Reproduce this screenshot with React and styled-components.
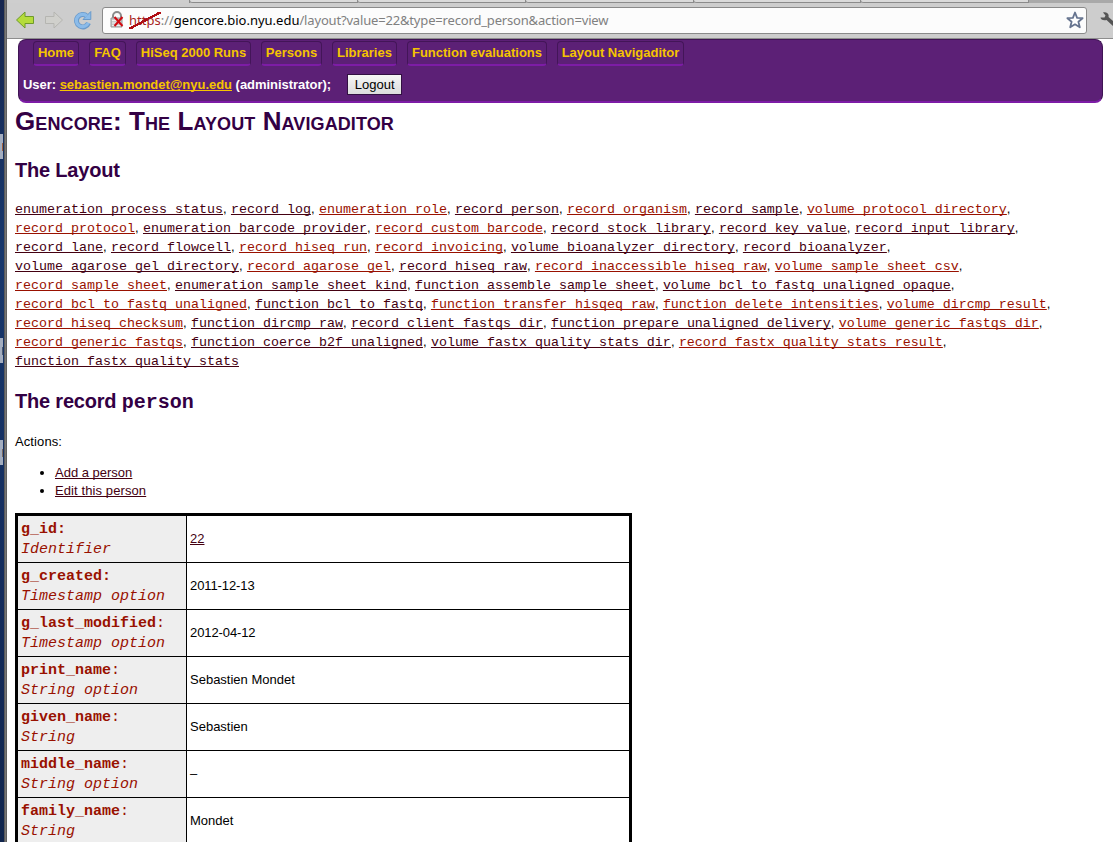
import React from "react";
import styled, { createGlobalStyle } from "styled-components";

const GlobalStyle = createGlobalStyle`
  * { box-sizing: border-box; }
  html, body { margin: 0; padding: 0; overflow: hidden; }
  body { font-family: "Liberation Sans", Arial, sans-serif; font-size: 13px; color: #000; background: #fff; }
`;

const Screen = styled.div`
  display: flex;
  width: 1113px;
  height: 842px;
  overflow: hidden;
`;

const Desktop = styled.div`
  flex: none;
  width: 4px;
  padding-top: 134px;
  background: linear-gradient(#16264f, #17376c 30%, #142c5c 70%, #10254d);
`;

const DesktopLabel = styled.div`
  display: flex;
  align-items: center;
  justify-content: flex-end;
  width: 3px;
  height: 25px;
  margin-bottom: ${(p) => p.$after || 0}px;
  background: #a3adbf;

  &::after {
    content: "";
    width: 1px;
    height: 8px;
    background: ${(p) => p.$mark};
  }
`;

const WindowEdge = styled.div`
  flex: none;
  width: 3px;
  background: linear-gradient(90deg, #4b4b4b, #777 50%, #555);
`;

const Browser = styled.div`
  flex: 1;
  min-width: 0;
  display: flex;
  flex-direction: column;
  background: #fff;
`;

const TabStrip = styled.div`
  flex: none;
  display: flex;
  height: 3px;
  background: #a9a9a9;
  border-top-left-radius: 3px;
`;

const Tab = styled.div`
  width: ${(p) => p.$w}px;
  background: ${(p) => (p.$active ? "#cecece" : "#dadada")};
  border-bottom: ${(p) => (p.$active ? "0" : "1px solid #8b8b8b")};
  border-right: 1px solid #8b8b8b;
  border-bottom-left-radius: ${(p) => (p.$active ? 0 : 3)}px;
`;

const Toolbar = styled.div`
  flex: none;
  display: flex;
  align-items: center;
  height: 36px;
  padding: 0 0 1px 8px;
  background: #cdcdcd;
  border-bottom: 1px solid #8d8d8d;
`;

const ToolIcon = styled.svg`
  flex: none;
  width: 20px;
  height: 20px;
  margin-right: ${(p) => p.$gap}px;
`;

const AddressBar = styled.div`
  flex: none;
  display: flex;
  align-items: center;
  width: 985px;
  height: 27px;
  padding: 0 1px 0 6px;
  background: #fcfcfc;
  border: 1px solid #8a8a8a;
  border-radius: 3px;
  margin-right: 12px;
`;

const Url = styled.div`
  flex: 1;
  font-family: "Noto Sans", "Open Sans", sans-serif;
  font-size: 13px;
  line-height: 20px;
  color: #808080;
  white-space: nowrap;
`;

const Scheme = styled.span`
  display: inline-block;
  height: 17px;
  line-height: 17px;
  color: #a81e22;
  background: linear-gradient(to bottom right, transparent 46%, #b00c12 46%, #b00c12 54%, transparent 54%);
`;

const Host = styled.span`
  color: #000;
`;

const UrlPath = styled.span`
  letter-spacing: -0.17px;
`;

const Page = styled.main`
  padding: 0 10px 0 8px;
`;

const Banner = styled.header`
  height: 64px;
  margin-left: 3px;
  padding: 1px 4px 0;
  background: #5c2076;
  border: 1px solid #3f1454;
  border-bottom: 2px solid #7d1ca6;
  border-radius: 8px;
  color: #fff;
  font-weight: bold;
`;

const Nav = styled.nav`
  display: flex;
  gap: 10px;
  padding-left: 10px;
`;

const NavItem = styled.a`
  width: ${(p) => p.$w}px;
  height: 25px;
  line-height: 22px;
  text-align: center;
  white-space: nowrap;
  color: #f5c400;
  border: 1px solid #431558;
  border-bottom: 2px solid #7d1ca6;
  border-radius: 4px;
`;

const UserRow = styled.div`
  display: flex;
  align-items: center;
  height: 21px;
  margin-top: 8px;
  white-space: pre;
  letter-spacing: -0.03px;
`;

const Mail = styled.a`
  color: #f5c400;
  text-decoration: underline;
  text-decoration-skip-ink: none;
`;

const Logout = styled.button`
  width: 55px;
  height: 21px;
  margin-left: 16px;
  padding: 0;
  font: 13px "Liberation Sans", Arial, sans-serif;
  color: #000;
  background: linear-gradient(#f6f6f6, #dcdcdc);
  border: 1px solid #321042;
`;

const Title = styled.h1`
  margin: 3px 0 0;
  font-size: 26px;
  line-height: 30px;
  font-variant: small-caps;
  letter-spacing: 0.1px;
  color: #330044;
`;

const Heading = styled.h2`
  margin: ${(p) => p.$top}px 0 0;
  font-size: 20px;
  line-height: 24px;
  letter-spacing: -0.2px;
  color: #330044;
`;

const Mono = styled.span`
  font-family: "Liberation Mono", monospace;
  letter-spacing: 0;
`;

const Links = styled.div`
  margin-top: 17px;
`;

const LinkLine = styled.div`
  height: 19px;
  line-height: 19px;
  white-space: pre;
`;

const TypeLink = styled.a`
  font-family: "Liberation Mono", monospace;
  font-size: 13.333px;
  color: ${(p) => (p.$fresh ? "#991100" : "#440011")};
  text-decoration: underline;
  text-decoration-skip-ink: none;
`;

const Separator = styled.span`
  display: inline-block;
  width: 8px;
`;

const Actions = styled.p`
  margin: 18px 0 0;
  line-height: 18px;
  letter-spacing: 0.1px;
`;

const ActionList = styled.ul`
  margin: 13px 0 0;
  padding-left: 40px;
  line-height: 18px;
`;

const Anchor = styled.a`
  color: #440011;
  letter-spacing: ${(p) => p.$spacing || 0}px;
  text-decoration: underline;
  text-decoration-skip-ink: none;
`;

const Record = styled.div`
  width: 617px;
  margin-top: 13px;
  border: 3px solid #000;
`;

const Row = styled.div`
  display: flex;
  height: 47px;
  border-bottom: 1px solid #000;
`;

const Field = styled.div`
  flex: none;
  width: 169px;
  padding: 4px 0 0 3px;
  background: #eee;
  border-right: 1px solid #000;
  font-family: "Liberation Mono", monospace;
  font-size: 15px;
  line-height: 20px;
  color: #991100;
`;

const Kind = styled.div`
  font-style: italic;
`;

const Value = styled.div`
  display: flex;
  align-items: center;
  padding: 0 0 2px 3px;
  letter-spacing: ${(p) => (p.$numeric ? -0.1 : 0)}px;
`;

const navItems = [
  ["Home", 46], ["FAQ", 37], ["HiSeq 2000 Runs", 115], ["Persons", 61],
  ["Libraries", 65], ["Function evaluations", 140], ["Layout Navigaditor", 127],
];

// A leading "*" marks a link that has not been visited.
const linkLines = [
  "enumeration_process_status record_log *enumeration_role record_person *record_organism record_sample *volume_protocol_directory",
  "*record_protocol enumeration_barcode_provider *record_custom_barcode record_stock_library record_key_value record_input_library",
  "record_lane record_flowcell *record_hiseq_run *record_invoicing volume_bioanalyzer_directory record_bioanalyzer",
  "volume_agarose_gel_directory *record_agarose_gel record_hiseq_raw *record_inaccessible_hiseq_raw *volume_sample_sheet_csv",
  "*record_sample_sheet enumeration_sample_sheet_kind function_assemble_sample_sheet volume_bcl_to_fastq_unaligned_opaque",
  "*record_bcl_to_fastq_unaligned function_bcl_to_fastq *function_transfer_hisqeq_raw *function_delete_intensities *volume_dircmp_result",
  "*record_hiseq_checksum function_dircmp_raw record_client_fastqs_dir function_prepare_unaligned_delivery *volume_generic_fastqs_dir",
  "*record_generic_fastqs function_coerce_b2f_unaligned volume_fastx_quality_stats_dir *record_fastx_quality_stats_result",
  "function_fastx_quality_stats",
].map((line) => line.split(" "));

const fields = [
  ["g_id", "Identifier", "22"],
  ["g_created", "Timestamp option", "2011-12-13"],
  ["g_last_modified", "Timestamp option", "2012-04-12"],
  ["print_name", "String option", "Sebastien Mondet"],
  ["given_name", "String", "Sebastien"],
  ["middle_name", "String option", "–"],
  ["family_name", "String", "Mondet"],
];

function Arrow({ fill, stroke, flip, gap }) {
  return (
    <ToolIcon viewBox="0 0 20 20" $gap={gap}>
      <path
        d="M1.5 10 10 2v4.5h8.5v7H10V18z"
        transform={flip ? "matrix(-1 0 0 1 20 0)" : undefined}
        fill={fill} stroke={stroke} strokeLinejoin="round"
      />
    </ToolIcon>
  );
}

export default function App() {
  return (
    <Screen>
      <GlobalStyle />
      <Desktop>
        <DesktopLabel $after={179} $mark="#a0603c" />
        <DesktopLabel $after={77} $mark="#4d5a70" />
        <DesktopLabel $mark="#7a6a60" />
      </Desktop>
      <WindowEdge />
      <Browser>
        <TabStrip>
          <Tab $w={183} $active />
          <Tab $w={168} /><Tab $w={168} /><Tab $w={168} /><Tab $w={167} /><Tab $w={168} />
        </TabStrip>
        <Toolbar>
          <Arrow fill="#b5dc3c" stroke="#6f9a2c" gap={9} />
          <Arrow fill="#d0d0cc" stroke="#b5b5b1" flip gap={9} />
          <ToolIcon viewBox="0 0 20 20" $gap={9}>
            <path d="M14 6.2A6.2 6.2 0 1 0 15.5 13" fill="none" stroke="#6a9acb" strokeWidth="5" />
            <path d="M17.8 1.5v8H10z" fill="#8bbbe9" stroke="#6a9acb" strokeLinejoin="round" />
            <path d="M14 6.2A6.2 6.2 0 1 0 15.3 12.7" fill="none" stroke="#8bbbe9" strokeWidth="3.2" />
          </ToolIcon>
          <AddressBar>
            <ToolIcon viewBox="0 0 20 20" $gap={0}>
              <path d="M4 9V6a4 4 0 0 1 8 0v3" fill="none" stroke="#8b8b8b" strokeWidth="2" />
              <path d="M2 8h11v9H2z" fill="#c9c9c9" stroke="#999" />
              <path d="M3 10.5h9M3 13h9M3 15.5h9" stroke="#eee" />
              <path d="m5.500 7 8 9M13.500 7l-8 9" stroke="#d00b12" strokeWidth="2" />
            </ToolIcon>
            <Url>
              <Scheme>https</Scheme>://<Host>gencore.bio.nyu.edu</Host>
              <UrlPath>/layout?value=22&amp;type=record_person&amp;action=view</UrlPath>
            </Url>
            <ToolIcon viewBox="0 0 20 20" $gap={0}>
              <path d="m10 2.500 2.100 5.300 5.500.4-4.200 3.600 1.400 5.500-4.800-3-4.800 3 1.400-5.500L2.400 8.200 7.900 7.800z" fill="#fff" stroke="#66748f" strokeWidth="1.800" strokeLinejoin="round" />
            </ToolIcon>
          </AddressBar>
          <ToolIcon viewBox="0 0 20 20" $gap={0}>
            <path d="M1.500 7.500h4l1-2-2.500-3c3-1 6.500 1 5.500 4.500l8 7-2.500 3-7.500-7c-3 1-6-.5-6-2.500z" fill="#555" />
          </ToolIcon>
        </Toolbar>
        <Page>
          <Banner>
            <Nav>
              {navItems.map(([name, w]) => <NavItem key={name} $w={w}>{name}</NavItem>)}
            </Nav>
            <UserRow>
              <span>User: <Mail>sebastien.mondet@nyu.edu</Mail> (administrator);</span>
              <Logout>Logout</Logout>
            </UserRow>
          </Banner>
          <Title>Gencore: The Layout Navigaditor</Title>
          <Heading $top={22}>The Layout</Heading>
          <Links>
            {linkLines.map((line, i) => (
              <LinkLine key={i}>
                {line.map((name) => (
                  <React.Fragment key={name}>
                    <TypeLink $fresh={name[0] === "*"}>{name.replace("*", "")}</TypeLink>
                    {i < linkLines.length - 1 && <Separator>, </Separator>}
                  </React.Fragment>
                ))}
              </LinkLine>
            ))}
          </Links>
          <Heading $top={19}>The record <Mono>person</Mono></Heading>
          <Actions>Actions:</Actions>
          <ActionList>
            <li><Anchor>Add a person</Anchor></li>
            <li><Anchor $spacing={0.1}>Edit this person</Anchor></li>
          </ActionList>
          <Record>
            {fields.map(([name, kind, value], i) => (
              <Row key={name}>
                <Field>
                  {i < 2 ? <b>{name}:</b> : <><b>{name}</b>:</>}
                  <Kind>{kind}</Kind>
                </Field>
                <Value $numeric={i < 3}>{i === 0 ? <Anchor>{value}</Anchor> : value}</Value>
              </Row>
            ))}
          </Record>
        </Page>
      </Browser>
    </Screen>
  );
}
